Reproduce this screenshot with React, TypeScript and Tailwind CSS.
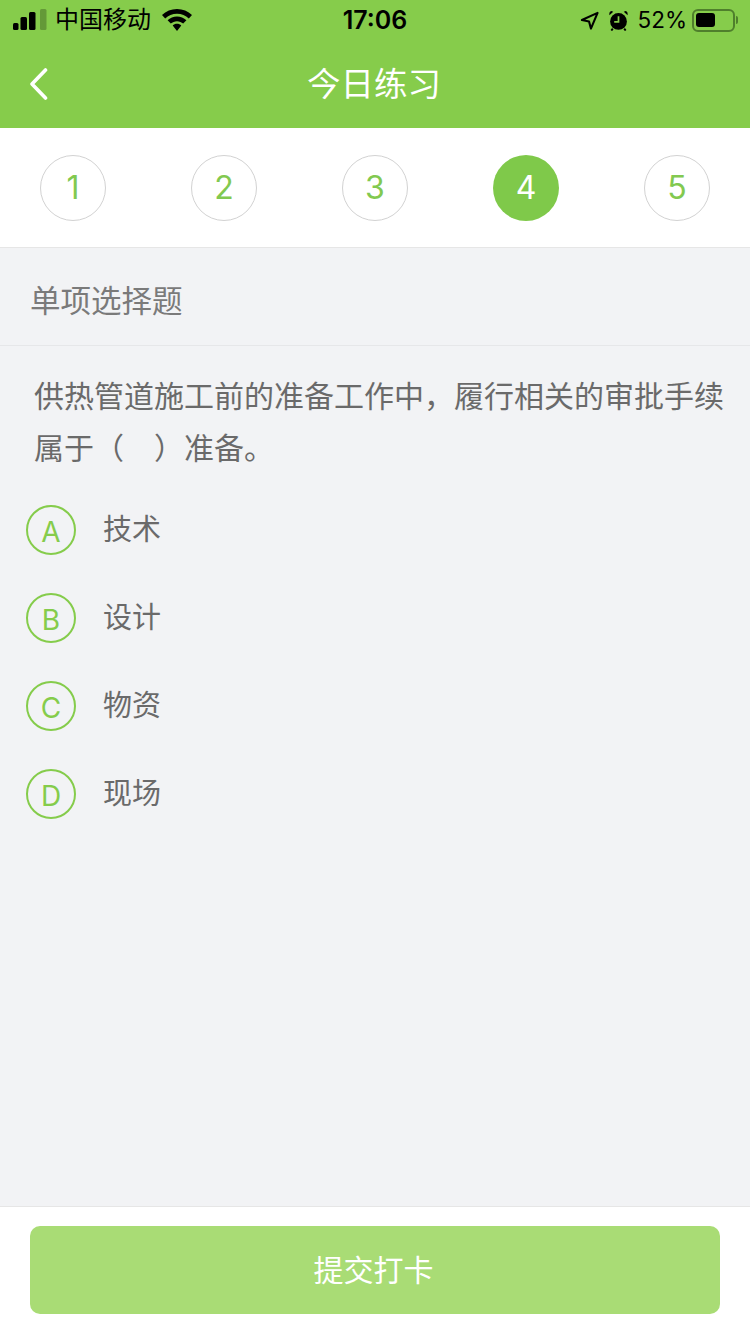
const font = '[font-family:"Liberation_Sans","Noto_Sans_CJK_SC",sans-serif]';

function StatusBar() {
  return (
    <div className="flex h-10 items-center justify-between pl-[13px] pr-[12px] text-black">
      <div className="flex w-[260px] items-center">
        <svg width="34" height="22" viewBox="0 0 34 22" fill="currentColor">
          <rect x="0" y="14" width="5.5" height="7" rx="1.5" />
          <rect x="7.5" y="8" width="6.5" height="13" rx="1.5" />
          <rect x="16" y="3" width="6.5" height="18" rx="1.5" />
          <rect x="27" y="0" width="6.5" height="21" rx="1.5" opacity="0.25" />
        </svg>
        <span className="ml-[8px] text-[24px] leading-none tracking-[0]">中国移动</span>
        <svg className="ml-[11px]" width="30" height="22" viewBox="0 0 30 22" fill="currentColor">
          <path d="M15 0C9.2 0 4 2.2 0 6l3.2 3.4C6.3 6.5 10.4 4.7 15 4.7s8.7 1.8 11.8 4.7L30 6C26 2.2 20.8 0 15 0z" />
          <path d="M15 7.6c-3.6 0-6.9 1.4-9.4 3.7l3.2 3.3c1.6-1.5 3.8-2.4 6.2-2.4s4.6.9 6.2 2.4l3.2-3.3C21.9 9 18.6 7.6 15 7.6z" />
          <path d="M15 14.8c-1.7 0-3.2.6-4.3 1.7L15 22l4.3-5.5c-1.1-1.1-2.6-1.7-4.3-1.7z" />
        </svg>
      </div>
      <span className="pointer-events-none absolute left-0 right-0 text-center text-[25px] font-semibold leading-none [font-family:Inter,sans-serif]">17:06</span>
      <div className="flex items-center">
        <svg width="19" height="19" viewBox="0 0 20 20" fill="none" stroke="currentColor" strokeWidth="2.2" strokeLinejoin="round">
          <path d="M18.5 2 2 9.5l7.5 1.5 2 7.5z" />
        </svg>
        <svg className="ml-[9px]" width="21" height="21" viewBox="0 0 22 22" fill="currentColor">
          <circle cx="11" cy="12" r="8.8" />
          <path d="M1.5 5.5 5.5 1.8 3.5 1C2 1.3 1 3 1.5 5.5zM20.5 5.5 16.5 1.8 18.5 1c1.5.3 2.5 2 2 4.5z" />
          <path d="M11 6.5V12.5H6.5" fill="none" stroke="#86cc4b" strokeWidth="1.8" />
          <path d="M5 19.5 3.5 21.5M17 19.5 18.5 21.5" stroke="currentColor" strokeWidth="2" />
        </svg>
        <span className="ml-[9px] text-[22.5px] font-normal leading-none [font-family:Inter,sans-serif]">52%</span>
        <div className="ml-[5px] flex items-center">
          <div className="flex h-[23px] w-[43px] items-center rounded-[6px] border-2 border-[#4f7f2c] p-[2px]">
            <div className="h-[14px] w-[19px] rounded-[3px] bg-black" />
          </div>
          <div className="ml-[1px] h-[8px] w-[2px] rounded-r-full bg-[#4f7f2c]" />
        </div>
      </div>
    </div>
  );
}

function Step({ n, active }: { n: number; active?: boolean }) {
  return (
    <div
      className={
        active
          ? "flex h-[66px] w-[66px] items-center justify-center rounded-full bg-[#7fc94a] text-[32px] font-normal text-white [font-family:Inter,sans-serif]"
          : "flex h-[66px] w-[66px] items-center justify-center rounded-full border border-[#d2d2d2] text-[32px] font-normal text-[#82c950] [font-family:Inter,sans-serif]"
      }
    >
      {n}
    </div>
  );
}

function Option({ letter, text }: { letter: string; text: string }) {
  return (
    <div className="flex h-[88px] items-center pl-[26px]">
      <div className="flex h-[50px] w-[50px] items-center justify-center rounded-full border-2 border-[#85cc4b] pt-[3px] text-[28px] font-normal text-[#85cc4b] [font-family:Inter,sans-serif]">
        {letter}
      </div>
      <span className="ml-[27px] pt-[1px] text-[29px] leading-none text-[#6a6a6a]">{text}</span>
    </div>
  );
}

export default function App() {
  return (
    <div className={`relative flex h-[1334px] w-[750px] flex-col overflow-hidden bg-[#f2f3f5] ${font}`}>
      <header className="relative h-[128px] shrink-0 bg-[#86cc4b]">
        <StatusBar />
        <div className="relative flex h-[88px] items-center justify-center">
          <svg className="absolute left-[29px] top-[28px]" width="20" height="32" viewBox="0 0 20 32" fill="none" stroke="white" strokeWidth="3.6" strokeLinecap="round" strokeLinejoin="round">
            <path d="M16.5 2 3 16l13.5 14" />
          </svg>
          <h1 className="pr-[2px] pt-[2px] text-[33.5px] font-normal leading-none text-white">今日练习</h1>
        </div>
      </header>

      <div className="flex h-[120px] shrink-0 items-center justify-between border-b border-[#e6e6e6] bg-white px-[40px]">
        {[1, 2, 3, 4, 5].map((n) => (
          <Step key={n} n={n} active={n === 4} />
        ))}
      </div>

      <div className="flex h-[98px] shrink-0 items-center border-b border-[#e6e7e9] pl-[30px] pt-[10px] text-[30.5px] text-[#7a7a7a]">
        单项选择题
      </div>

      <p className="shrink-0 pl-[34px] pr-[20px] pt-[25px] text-[30px] leading-[52px] text-[#6a6a6a]">
        供热管道施工前的准备工作中，履行相关的审批手续属于（　）准备。
      </p>

      <div className="mt-[11px] flex shrink-0 flex-col">
        <Option letter="A" text="技术" />
        <Option letter="B" text="设计" />
        <Option letter="C" text="物资" />
        <Option letter="D" text="现场" />
      </div>

      <footer className="mt-auto h-[128px] shrink-0 border-t border-[#e6e6e6] bg-white px-[30px] pt-[19px]">
        <button className="flex h-[88px] w-full items-center justify-center rounded-[10px] bg-[#a9dc75] pr-[3px] pt-[1px] text-[30px] text-white">
          提交打卡
        </button>
      </footer>
    </div>
  );
}
